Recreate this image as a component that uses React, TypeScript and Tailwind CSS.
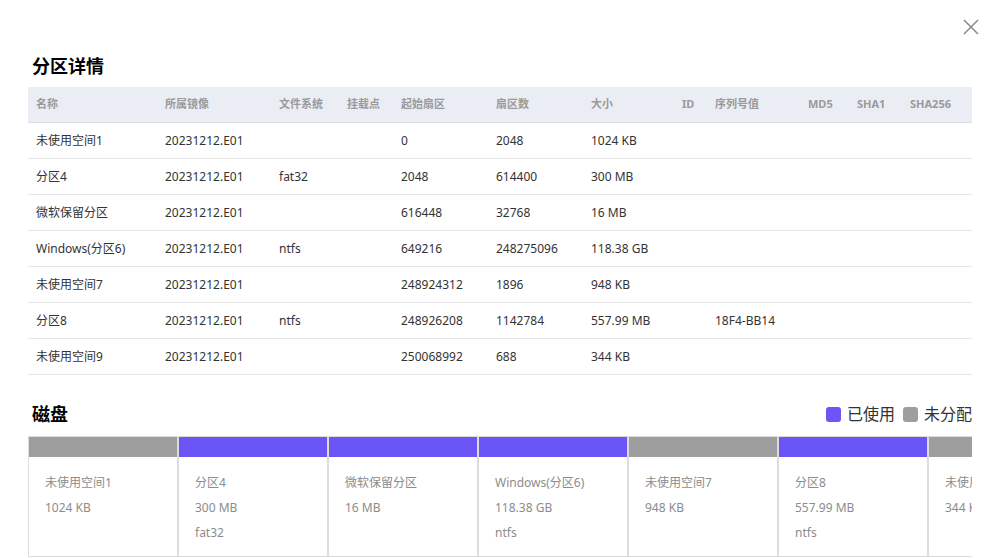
import React from "react";

const cols = [
  { k: "名称", w: 129 },
  { k: "所属镜像", w: 114 },
  { k: "文件系统", w: 68 },
  { k: "挂载点", w: 54 },
  { k: "起始扇区", w: 95 },
  { k: "扇区数", w: 95 },
  { k: "大小", w: 91 },
  { k: "ID", w: 33 },
  { k: "序列号值", w: 93 },
  { k: "MD5", w: 49 },
  { k: "SHA1", w: 53 },
  { k: "SHA256", w: 70 },
];

const rows: string[][] = [
  ["未使用空间1", "20231212.E01", "", "", "0", "2048", "1024 KB", "", "", "", "", ""],
  ["分区4", "20231212.E01", "fat32", "", "2048", "614400", "300 MB", "", "", "", "", ""],
  ["微软保留分区", "20231212.E01", "", "", "616448", "32768", "16 MB", "", "", "", "", ""],
  ["Windows(分区6)", "20231212.E01", "ntfs", "", "649216", "248275096", "118.38 GB", "", "", "", "", ""],
  ["未使用空间7", "20231212.E01", "", "", "248924312", "1896", "948 KB", "", "", "", "", ""],
  ["分区8", "20231212.E01", "ntfs", "", "248926208", "1142784", "557.99 MB", "", "18F4-BB14", "", "", ""],
  ["未使用空间9", "20231212.E01", "", "", "250068992", "688", "344 KB", "", "", "", "", ""],
];

const cards = [
  { name: "未使用空间1", size: "1024 KB", fs: "", used: false },
  { name: "分区4", size: "300 MB", fs: "fat32", used: true },
  { name: "微软保留分区", size: "16 MB", fs: "", used: true },
  { name: "Windows(分区6)", size: "118.38 GB", fs: "ntfs", used: true },
  { name: "未使用空间7", size: "948 KB", fs: "", used: false },
  { name: "分区8", size: "557.99 MB", fs: "ntfs", used: true },
  { name: "未使用空间9", size: "344 KB", fs: "", used: false },
];

const font = { fontFamily: '"Noto Sans", "Noto Sans CJK SC", sans-serif' };

export default function App() {
  return (
    <div className="relative w-[989px] h-[558px] bg-white overflow-hidden" style={font}>
      <button className="absolute right-[10px] top-[19px] w-[16px] h-[16px]">
        <svg width="16" height="16" viewBox="0 0 16 16">
          <path d="M1 1 L15 15 M15 1 L1 15" stroke="#8a8a8a" strokeWidth="1.5" fill="none" />
        </svg>
      </button>
      <div className="pl-[28px] pr-[17px] pt-[54px]">
        <div className="pl-[4px] h-[24px] leading-[24px] text-[18px] font-bold text-black mb-[9px]">分区详情</div>
        <div className="w-[944px]">
          <div className="flex h-[36px] bg-[#ebedf5] border-b border-[#d9dbe3]">
            {cols.map((c) => (
              <div
                key={c.k}
                className="px-[8px] flex items-center text-[11px] font-bold text-[#9a9a9a] whitespace-nowrap"
                style={{ width: c.w }}
              >
                {c.k}
              </div>
            ))}
          </div>
          {rows.map((r, i) => (
            <div key={i} className="flex h-[36px] border-b border-[#e5e5e5]">
              {r.map((v, j) => (
                <div
                  key={j}
                  className="px-[8px] flex items-center text-[12px] text-[#333] whitespace-nowrap"
                  style={{ width: cols[j].w }}
                >
                  {v}
                </div>
              ))}
            </div>
          ))}
        </div>
        <div className="mt-[26px] w-[944px] h-[26px] flex items-center justify-between mb-[9px]">
          <div className="pl-[4px] text-[18px] font-bold text-black leading-[24px]">磁盘</div>
          <div className="flex items-center text-[16px] text-[#333] leading-[20px]">
            <span className="w-[15px] h-[15px] rounded-[3px] bg-[#6c55f6] mr-[6px]" />
            <span>已使用</span>
            <span className="w-[15px] h-[15px] rounded-[3px] bg-[#9e9e9e] ml-[8px] mr-[6px]" />
            <span>未分配</span>
          </div>
        </div>
        <div className="w-[944px] overflow-hidden">
          <div className="flex w-[1050px]">
            {cards.map((c, i) => (
              <div key={i} className="w-[150px] h-[121px] shrink-0 border border-[#dcdcdc] flex flex-col">
                <div className={c.used ? "h-[20px] bg-[#6c55f6]" : "h-[20px] bg-[#9e9e9e]"} />
                <div className="pl-[16px] pt-[13px] text-[12px] leading-[25px] text-[#8c8c8c] whitespace-nowrap">
                  <div>{c.name}</div>
                  <div>{c.size}</div>
                  {c.fs && <div>{c.fs}</div>}
                </div>
              </div>
            ))}
          </div>
        </div>
      </div>
    </div>
  );
}
